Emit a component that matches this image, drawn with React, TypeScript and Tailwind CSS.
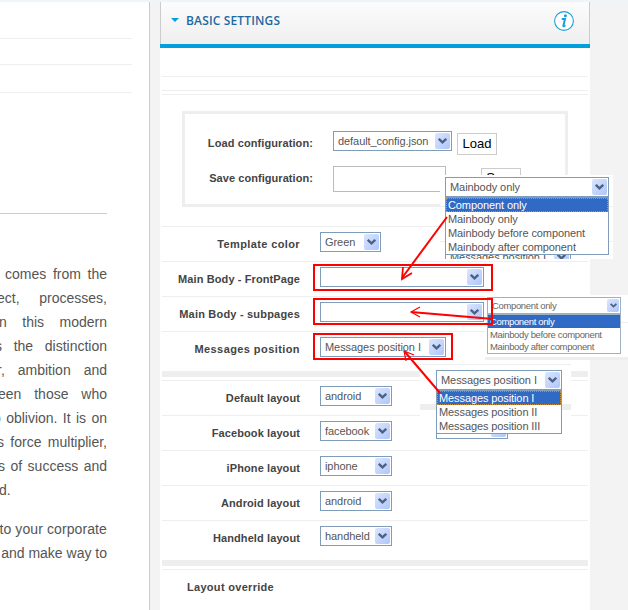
import clsx from "clsx"

const introLines = [
  { text: "comes from the", width: "w-[102px]" },
  { text: "ect, processes,", width: "w-[110px]" },
  { text: "n this modern", width: "w-[108px]" },
  { text: "s the distinction", width: "w-[112px]" },
  { text: "r, ambition and", width: "w-[110px]" },
  { text: "een those who", width: "w-[109px]" },
  { text: "o oblivion. It is on", width: "w-[114px]" },
  { text: "s force multiplier,", width: "w-[110px]" },
  { text: "s of success and", width: "w-[109px]" },
] as const

const mainRows = [
  {
    label: "Template color",
    value: "Green",
    width: "w-[61px]",
    tracking: "tracking-[0.38px]",
  },
  {
    label: "Main Body - FrontPage",
    value: "",
    width: "w-[164px]",
    tracking: "tracking-[0.1px]",
  },
  {
    label: "Main Body - subpages",
    value: "",
    width: "w-[164px]",
    tracking: "tracking-[0.2px]",
  },
  {
    label: "Messages position",
    value: "Messages position I",
    width: "w-[126px]",
    tracking: "tracking-[0.42px]",
  },
] as const

const layoutRows = [
  { label: "Default layout", value: "android", width: "w-[72px]" },
  { label: "Facebook layout", value: "facebook", width: "w-[72px]" },
  { label: "iPhone layout", value: "iphone", width: "w-[72px]" },
  { label: "Android layout", value: "android", width: "w-[72px]" },
  { label: "Handheld layout", value: "handheld", width: "w-[72px]" },
] as const

function Arrow({ small = false }: { small?: boolean }) {
  return (
    <span
      className={clsx(
        "flex shrink-0 items-center justify-center rounded-[2px] bg-gradient-to-br from-[#dbe6fe] to-[#aec6fa]",
        small ? "h-[13px] w-[12px]" : "h-4 w-[15px]"
      )}
    >
      <svg
        viewBox="0 0 9 6"
        className={small ? "h-[5px] w-[7px]" : "h-[6px] w-[9px]"}
      >
        <path
          d="M0.8 0.8 L4.5 4.4 L8.2 0.8"
          fill="none"
          stroke="#4d6185"
          strokeWidth="2.3"
        />
      </svg>
    </span>
  )
}

function Select({ value, width }: { value: string; width: string }) {
  return (
    <div
      className={clsx(
        "flex h-5 shrink-0 items-center justify-between border border-[#7f9db9] bg-white pl-[4px] pr-px text-[11px] leading-none tracking-[-0.07px] text-[#555]",
        width
      )}
    >
      <span className="whitespace-nowrap">{value}</span>
      <Arrow />
    </div>
  )
}

function Row({
  label,
  value,
  width,
  tracking = "tracking-[0.1px]",
}: {
  label: string
  value: string
  width: string
  tracking?: string
}) {
  return (
    <div className="flex h-[35px] border-t border-[#eee] pt-[5px]">
      <span
        className={clsx(
          "mr-5 w-[138px] whitespace-nowrap pt-[5px] text-right text-[11px] font-bold leading-[15px] text-[#444]",
          tracking
        )}
      >
        {label}
      </span>
      <Select value={value} width={width} />
    </div>
  )
}

function Options({ items }: { items: readonly string[] }) {
  return (
    <ul className="border border-[#7f9db9] bg-white text-[11px] leading-[14px] tracking-[-0.1px] text-[#555]">
      {items.map((item, i) => (
        <li
          key={item}
          className={clsx(
            "h-[14px] whitespace-nowrap pl-[2px]",
            i === 0 &&
              "bg-[#316ac5] text-white outline-1 -outline-offset-1 outline-dotted outline-[#c98f3c]"
          )}
        >
          {item}
        </li>
      ))}
    </ul>
  )
}

function Sidebar() {
  return (
    <aside className="h-full w-[150px] shrink-0 overflow-hidden border-r border-[#ccc] bg-white">
      <div className="h-[37px] w-[132px] border-b border-[#eee]" />
      <div className="h-[26px] w-[132px] border-b border-[#eee]" />
      <div className="h-[28px] w-[132px] border-b border-[#eee]" />
      <div className="h-[121px] w-[107px] border-b border-[#ccc]" />
      <div className="flex w-[107px] flex-col items-end pt-[48px] text-sm leading-6 text-[#555]">
        {introLines.map((line) => (
          <p
            key={line.text}
            className={clsx("shrink-0 [text-align-last:justify]", line.width)}
          >
            {line.text}
          </p>
        ))}
        <p className="w-[108px]">d.</p>
        <p className="mt-[15px] whitespace-nowrap tracking-[0.1px]">
          to your corporate
        </p>
        <p className="whitespace-nowrap">and make way to</p>
      </div>
    </aside>
  )
}

function ConfigBox() {
  return (
    <div className="ml-[22px] mt-4 h-24 w-[386px] border-[3px] border-[#eee]">
      <div className="flex pt-[17px]">
        <span className="mr-5 w-[128px] whitespace-nowrap pt-[5px] text-right text-[11px] font-bold leading-[15px] tracking-[0.1px] text-[#444]">
          Load configuration:
        </span>
        <Select value="default_config.json" width="w-[119px]" />
        <button className="ml-[5px] mt-[2px] h-[22px] w-10 border border-[#ccc] bg-white pb-[2px] text-[13px] leading-none text-black">
          Load
        </button>
      </div>
      <div className="flex pt-[11px]">
        <span className="mr-5 w-[128px] whitespace-nowrap pt-[5px] text-right text-[11px] font-bold leading-[15px] tracking-[0.06px] text-[#444]">
          Save configuration:
        </span>
        <div className="h-[26px] w-[113px] border border-[#bbb]" />
        <button className="ml-[35px] mt-[2px] h-[22px] w-10 border border-[#ccc] bg-white pb-[3px] text-[13px] leading-none text-black">
          Save
        </button>
      </div>
    </div>
  )
}

function Panel() {
  return (
    <main className="w-[430px] shrink-0 bg-white">
      <header className="flex h-[46px] items-start border-b-4 border-[#00a0dc] bg-gradient-to-b from-[#fcfcfc] to-[#efefef]">
        <div className="flex h-[42px] w-full border-x border-[#ccc] pl-[10px] pr-[15px]">
          <svg viewBox="0 0 8 4" className="mt-4 h-1 w-2">
            <path d="M0 0h8L4 4z" fill="#00a0dc" />
          </svg>
          <h1 className="ml-[7px] mt-[10px] whitespace-nowrap font-['Open_Sans',sans-serif] text-[12px] font-semibold leading-[18px] tracking-[0.15px] text-[#1f68a2]">
            BASIC SETTINGS
          </h1>
          <svg viewBox="0 0 20 20" className="ml-auto mt-[9px] size-5">
            <circle
              cx="10"
              cy="10"
              r="9.4"
              fill="#fff"
              stroke="#1a9fd8"
              strokeWidth="1.1"
            />
            <circle cx="11.4" cy="4.7" r="1.5" fill="#1a9fd8" />
            <path
              d="M7.8 8h3.2L9.4 14.6c-.2 1 .6.8 1.9-.5"
              fill="none"
              stroke="#1a9fd8"
              strokeWidth="2"
            />
          </svg>
        </div>
      </header>
      <div className="mx-[2px]">
        <div className="h-[29px] border-b border-[#eee]" />
        <div className="h-[14px] border-b border-[#eee]" />
        <div className="h-1 border-b border-[#eee]" />
      </div>
      <ConfigBox />
      <section className="mx-[2px] mt-[19px]">
        {mainRows.map((row) => (
          <Row key={row.label} {...row} />
        ))}
        <div className="mb-[3px] mt-[5px] h-[6px] bg-[#eee]" />
        {layoutRows.map((row) => (
          <Row key={row.label} {...row} />
        ))}
        <div className="mb-[3px] mt-[5px] h-[6px] bg-[#eee]" />
        <div className="border-t border-[#eee] pl-[25px] pt-[10px] text-[11px] font-bold leading-[15px] tracking-[0.3px] text-[#444]">
          Layout override
        </div>
      </section>
    </main>
  )
}

function FrontPageMenu() {
  return (
    <div className="absolute left-[440px] top-[175px] h-[84px] w-[173px] overflow-hidden bg-white">
      <div className="mt-[31px] h-px bg-[#eee]" />
      <div className="mt-[34px] h-px bg-[#eee]" />
      <div className="ml-[5px] mt-[5px]">
        <Select value="Messages position I" width="w-[126px]" />
      </div>
      <div className="absolute left-[5px] top-[2px] w-[164px]">
        <Select value="Mainbody only" width="w-full" />
        <Options
          items={[
            "Component only",
            "Mainbody only",
            "Mainbody before component",
            "Mainbody after component",
          ]}
        />
      </div>
    </div>
  )
}

function SubpagesMenu() {
  return (
    <div className="absolute left-[485px] top-[295px] h-[65px] w-[143px] bg-white">
      <div className="mt-[27px] h-px bg-[#eee]" />
      <div className="mt-[34px] h-[3px] bg-[#eee]" />
      <div className="absolute left-[2px] top-[2px] w-[134px] text-[9.5px] leading-[13px] tracking-[-0.35px] text-[#666]">
        <div className="flex h-[17px] items-center justify-between border border-[#9db1c5] bg-white pl-[4px] pr-px">
          <span>Component only</span>
          <Arrow small />
        </div>
        <ul className="border border-[#9db1c5] bg-white">
          <li className="h-[13px] bg-[#316ac5] pl-[2px] text-white outline-1 -outline-offset-1 outline-dotted outline-[#5a5f70]">
            Component only
          </li>
          <li className="h-3 whitespace-nowrap pl-[2px]">
            Mainbody before component
          </li>
          <li className="h-[13px] whitespace-nowrap pl-[2px]">
            Mainbody after component
          </li>
        </ul>
      </div>
    </div>
  )
}

function MessagesMenu() {
  return (
    <div className="absolute left-[420px] top-[364px] h-[75px] w-[151px] overflow-hidden bg-white">
      <div className="h-px bg-[#eee]" />
      <div className="mt-[39px] h-[6px] bg-[#eee]" />
      <div className="ml-4 mt-[9px]">
        <Select value="" width="w-[72px]" />
      </div>
      <div className="absolute left-4 top-[6px] w-[126px]">
        <Select value="Messages position I" width="w-full" />
        <Options
          items={[
            "Messages position I",
            "Messages position II",
            "Messages position III",
          ]}
        />
      </div>
    </div>
  )
}

export default function App() {
  return (
    <div className="relative h-[610px] w-[628px] overflow-hidden bg-[#f3f3f3] font-['Liberation_Sans',Arial,sans-serif]">
      <div className="h-[2px] bg-[#eff4f9]" />
      <div className="flex h-[608px] gap-[10px]">
        <Sidebar />
        <Panel />
      </div>

      <FrontPageMenu />
      <SubpagesMenu />
      <MessagesMenu />

      {/* highlights and arrows */}
      <div className="absolute left-[313px] top-[264px] h-[27px] w-[180px] border-2 border-[#f00]" />
      <div className="absolute left-[313px] top-[298px] h-[27px] w-[180px] border-2 border-[#f00]" />
      <div className="absolute left-[313px] top-[333px] h-[27px] w-[140px] border-2 border-[#f00]" />
      <svg
        viewBox="0 0 628 610"
        className="pointer-events-none absolute left-0 top-0 h-[610px] w-[628px]"
        fill="none"
        stroke="#f00"
        strokeWidth="2"
      >
        <path d="M447 217 L402 278" />
        <path d="M403 267 L402 279 L412 273" strokeWidth="1.8" />
        <path d="M493 319 L411 312" />
        <path d="M420 307 L411 312 L420 317" strokeWidth="1.2" />
        <path d="M440 393 L405 352" />
        <path d="M406 361 L404 351 L414 355" strokeWidth="1.2" />
      </svg>
    </div>
  )
}
